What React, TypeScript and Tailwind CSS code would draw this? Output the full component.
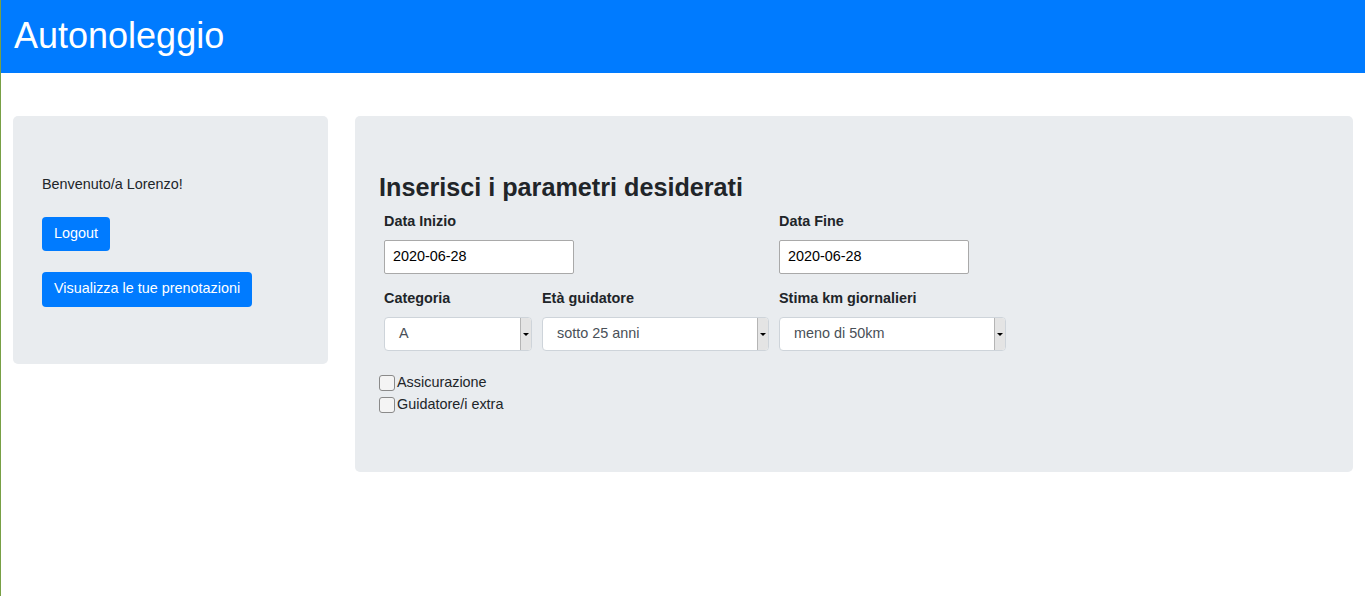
import React from 'react';

const FakeSelect: React.FC<{ value: string; width: string; indent?: string }> = ({ value, width, indent = 'pl-[14px]' }) => (
   <div className={`${width} h-[34px] flex bg-white border border-[#ced4da] rounded-[4px] overflow-hidden`}>
      <div className={`flex-1 flex items-center ${indent} text-[#495057] text-[14.4px]`}>{value}</div>
      <div className="w-[11px] bg-[#e4e4e4] border-l border-[#b5b5b5] flex items-center justify-center">
         <div className="w-0 h-0 border-l-[3px] border-r-[3px] border-t-[3px] border-l-transparent border-r-transparent border-t-black" />
      </div>
   </div>
);

const Check: React.FC<{ label: string }> = ({ label }) => (
   <label className="flex items-center h-[22px] text-[14.4px] text-[#212529]">
      <span className="w-[16px] h-[16px] bg-[#f4f4f4] border border-[#8a8a8a] rounded-[3px]" />
      <span className="ml-[2px]">{label}</span>
   </label>
);

const App: React.FC = () => {
   return (
      <div className="min-h-[596px] bg-white border-l border-[#78a045] font-['Liberation_Sans',Arial,sans-serif] text-[#212529]">
         <header className="h-[73px] bg-[#007bff] flex items-center px-[13px]">
            <h1 className="text-white text-[36px] leading-none -mt-[2px]">Autonoleggio</h1>
         </header>

         <div className="flex items-start gap-[27px] pt-[43px] pl-[12px] pr-[12px]">
            {/* left panel */}
            <div className="w-[315px] h-[248px] shrink-0 bg-[#e9ecef] rounded-[5px] px-[29px] pt-[58px]">
               <p className="text-[14.4px] leading-[21.6px]">Benvenuto/a Lorenzo!</p>
               <button className="mt-[21px] h-[34px] flex items-center bg-[#007bff] text-white text-[14.4px] px-[12px] rounded-[4px]">Logout</button>
               <button className="mt-[21px] h-[35px] flex items-center bg-[#007bff] text-white text-[14.4px] px-[12px] rounded-[4px]">Visualizza le tue prenotazioni</button>
            </div>

            {/* right panel */}
            <div className="flex-1 h-[356px] bg-[#e9ecef] rounded-[5px] pl-[24px] pt-[56px]">
               <h3 className="text-[25.2px] font-bold leading-[30px]">Inserisci i parametri desiderati</h3>

               <div className="flex pl-[5px] mt-[9px]">
                  <div className="w-[395px]">
                     <p className="text-[14.4px] font-bold leading-[21.6px]">Data Inizio</p>
                     <div className="mt-[7px] w-[190px] h-[34px] bg-white border border-[#a9a9a9] rounded-[2px] flex items-center pl-[8px] text-[14.4px] text-black">2020-06-28</div>
                  </div>
                  <div>
                     <p className="text-[14.4px] font-bold leading-[21.6px]">Data Fine</p>
                     <div className="mt-[7px] w-[190px] h-[34px] bg-white border border-[#a9a9a9] rounded-[2px] flex items-center pl-[8px] text-[14.4px] text-black">2020-06-28</div>
                  </div>
               </div>

               <div className="flex pl-[5px] mt-[14px] gap-[10px]">
                  <div>
                     <p className="text-[14.4px] font-bold leading-[21.6px]">Categoria</p>
                     <div className="mt-[8px]"><FakeSelect value="A" width="w-[148px]" /></div>
                  </div>
                  <div>
                     <p className="text-[14.4px] font-bold leading-[21.6px]">Età guidatore</p>
                     <div className="mt-[8px]"><FakeSelect value="sotto 25 anni" width="w-[227px]" /></div>
                  </div>
                  <div>
                     <p className="text-[14.4px] font-bold leading-[21.6px]">Stima km giornalieri</p>
                     <div className="mt-[8px]"><FakeSelect value="meno di 50km" width="w-[227px]" /></div>
                  </div>
               </div>

               <div className="mt-[21px]">
                  <Check label="Assicurazione" />
                  <Check label="Guidatore/i extra" />
               </div>
            </div>
         </div>
      </div>
   );
};

export default App;
